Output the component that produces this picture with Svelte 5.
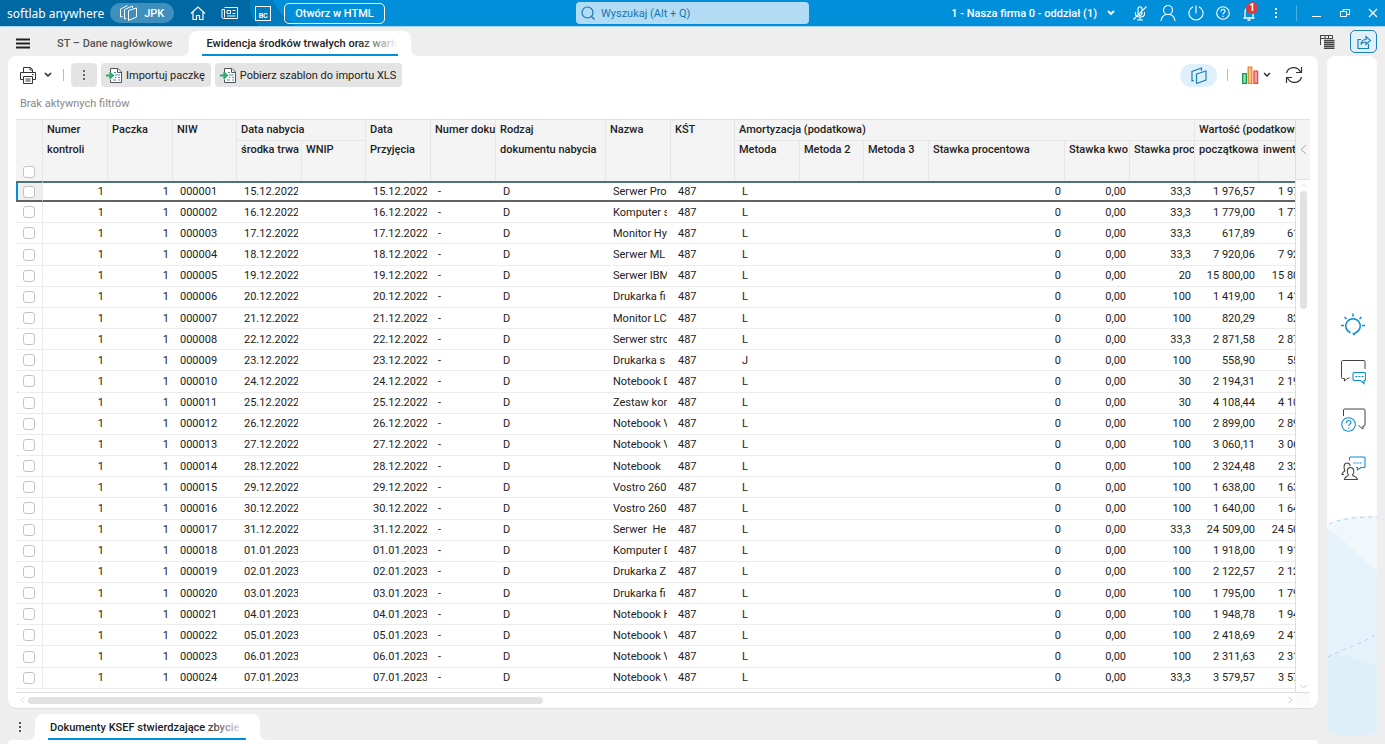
<script lang="ts">
    const widths = [27, 65, 65, 64, 65, 64, 65, 65, 110, 65, 64, 65, 64, 65, 136, 65, 65, 64, 65];

    // [acquisition date, name, method, percentage rate, initial value]
    const source = [
        ['15.12.2022', 'Serwer Pro', 'L', '33,3', '1 976,57'],
        ['16.12.2022', 'Komputer s', 'L', '33,3', '1 779,00'],
        ['17.12.2022', 'Monitor Hy', 'L', '33,3', '617,89'],
        ['18.12.2022', 'Serwer ML', 'L', '33,3', '7 920,06'],
        ['19.12.2022', 'Serwer IBM', 'L', '20', '15 800,00'],
        ['20.12.2022', 'Drukarka fi', 'L', '100', '1 419,00'],
        ['21.12.2022', 'Monitor LC', 'L', '100', '820,29'],
        ['22.12.2022', 'Serwer stro', 'L', '33,3', '2 871,58'],
        ['23.12.2022', 'Drukarka s', 'J', '100', '558,90'],
        ['24.12.2022', 'Notebook D', 'L', '30', '2 194,31'],
        ['25.12.2022', 'Zestaw kom', 'L', '30', '4 108,44'],
        ['26.12.2022', 'Notebook V', 'L', '100', '2 899,00'],
        ['27.12.2022', 'Notebook V', 'L', '100', '3 060,11'],
        ['28.12.2022', 'Notebook', 'L', '100', '2 324,48'],
        ['29.12.2022', 'Vostro 260', 'L', '100', '1 638,00'],
        ['30.12.2022', 'Vostro 260', 'L', '100', '1 640,00'],
        ['31.12.2022', 'Serwer  He', 'L', '33,3', '24 509,00'],
        ['01.01.2023', 'Komputer D', 'L', '100', '1 918,00'],
        ['02.01.2023', 'Drukarka Z', 'L', '100', '2 122,57'],
        ['03.01.2023', 'Drukarka fi', 'L', '100', '1 795,00'],
        ['04.01.2023', 'Notebook H', 'L', '100', '1 948,78'],
        ['05.01.2023', 'Notebook V', 'L', '100', '2 418,69'],
        ['06.01.2023', 'Notebook V', 'L', '100', '2 311,63'],
        ['07.01.2023', 'Notebook V', 'L', '33,3', '3 579,57']
    ];

    const rows = source.map(([date, name, method, rate, value], i) => ({
        niw: String(i + 1).padStart(6, '0'),
        date, name, method, rate, value
    }));

    let selected = $state(0);
    let query = $state('');
</script>

{#snippet excelIcon()}
    <svg width="17" height="17" viewBox="0 0 17 17" fill="none">
        <path d="M4.500 6V1.500h7.500l3.500 3.500v10.500h-11v-3" fill="#fff" stroke="#555" />
        <path d="M11.500 1.500v4h4" stroke="#555" />
        <path d="M8 5.500h2M9 8h5M9 10.500h1.500M12 10.500h2M7 13h3M12 13h2" stroke="#4a8fd0" />
        <path d="M0 8.500h5M3.500 5.500l3.500 3-3.500 3" stroke="#2fa36b" stroke-width="2" />
    </svg>
{/snippet}

<div class="app">
    <header class="topbar">
        <svg class="topbar-art" viewBox="0 0 300 26" preserveAspectRatio="none">
            <path d="M0 0h251c-3 9 0 17 8 26H0z" fill="#0068a3" />
            <path d="M251 0h22c4 9 10 17 22 26h-36c-8-9-11-17-8-26z" fill="#007bbd" />
        </svg>
        <div class="bar-left">
            <span class="brand">softlab anywhere</span>
            <button class="module">
                <svg width="18" height="16" viewBox="0 0 18 16" fill="none" stroke="#fff">
                    <path d="M8.500 5.500l8-2.500v9l-8 3.500z" />
                    <path d="M6.500 13.500l-2 .5V4.500l8-3.500v2" />
                    <path d="M2.500 11.500l-2 .5V4l7-3.500" />
                </svg>
                <span>JPK</span>
            </button>
            <button class="icon home" aria-label="Start">
                <svg width="16" height="16" viewBox="0 0 16 16" fill="none" stroke="#fff" stroke-width="1.200">
                    <path d="M1 8.500l7-6.500 7 6.500M3 7v7.500h3.500v-4h3v4H13V7" />
                </svg>
            </button>
            <button class="icon news" aria-label="Aktualności">
                <svg width="18" height="14" viewBox="0 0 18 14" fill="none" stroke="#fff">
                    <path d="M3.500 1.500h13v11h-14c-1 0-1.500-.5-1.500-1.500V3.500h2.500v8" />
                    <path d="M6 4.500h3.500v3H6zM11.500 4.500h3M11.500 7.500h3M6 10h8.500" />
                </svg>
            </button>
            <button class="bc" aria-label="BC">BC</button>
            <button class="outline">Otwórz w HTML</button>
        </div>
        <label class="search">
            <svg width="14" height="14" viewBox="0 0 14 14" fill="none" stroke="#1478b0" stroke-width="1.200">
                <circle cx="6.500" cy="6.500" r="5.500" />
                <path d="M10.500 10.500l3 3" />
            </svg>
            <input type="text" placeholder="Wyszukaj (Alt + Q)" aria-label="Wyszukaj" bind:value={query} />
        </label>
        <div class="bar-right">
            <button class="company">
                <span>1 - Nasza firma 0 - oddział (1)</span>
                <svg width="8" height="6" viewBox="0 0 8 6" fill="none" stroke="#fff" stroke-width="1.800"><path d="M1 1l3 3 3-3" /></svg>
            </button>
            <button class="icon" aria-label="Mikrofon">
                <svg width="16" height="16" viewBox="0 0 16 16" fill="none" stroke="#fff" stroke-width="1.100">
                    <path d="M6 9V4c0-3 4-3 4 0v4c0 3-3 3-4 1zM3.500 7v2c0 4 9 4 9 0V7M8 12v3M5 15h6M1.500 14.500l13-13" />
                </svg>
            </button>
            <button class="icon" aria-label="Użytkownik">
                <svg width="16" height="18" viewBox="0 0 16 18" fill="none" stroke="#fff" stroke-width="1.200">
                    <circle cx="8" cy="6" r="4.500" />
                    <path d="M1 17c.5-4 3-6 5-6.500h4c2 .5 4.500 2.500 5 6.500" />
                </svg>
            </button>
            <button class="icon" aria-label="Wyloguj">
                <svg width="16" height="16" viewBox="0 0 16 16" fill="none" stroke="#fff" stroke-width="1.100">
                    <path d="M5 1.700a7 7 0 1 0 6 0M8 .5v8" />
                </svg>
            </button>
            <button class="icon" aria-label="Pomoc">
                <svg width="14" height="14" viewBox="0 0 14 14" fill="none" stroke="#fff" stroke-width="1.100">
                    <circle cx="7" cy="7" r="6.300" />
                    <path d="M5 5.500c0-3 4-2.500 4-.3C9 6.700 7 6.700 7 8.500M7 9.700v1.200" />
                </svg>
            </button>
            <button class="icon bell" aria-label="Powiadomienia">
                <svg width="14" height="16" viewBox="0 0 14 16" fill="none" stroke="#fff" stroke-width="1.300">
                    <path d="M1.500 13h11M3 13V7c0-6 8-6 8 0v6M5.500 15h3" />
                </svg>
                <span class="badge">1</span>
            </button>
            <button class="icon more" aria-label="Więcej">
                <svg width="4" height="12" viewBox="0 0 4 12" fill="#fff"><path d="M1 1h2v2H1zM1 5h2v2H1zM1 9h2v2H1z" /></svg>
            </button>
            <span class="bar-line"></span>
            <div class="window-buttons">
                <button class="icon" aria-label="Minimalizuj">
                    <svg width="10" height="10" viewBox="0 0 10 10" stroke="#fff"><path d="M0 8.500h9" /></svg>
                </button>
                <button class="icon" aria-label="Przywróć">
                    <svg width="10" height="10" viewBox="0 0 10 10" fill="none" stroke="#fff"><path d="M.5 3.500h6v5h-6zM3 3V1.500h6.500v5H7" /></svg>
                </button>
                <button class="icon" aria-label="Zamknij">
                    <svg width="10" height="10" viewBox="0 0 10 10" stroke="#fff" stroke-width="1.200"><path d="M1 1l8 8M9 1L1 9" /></svg>
                </button>
            </div>
        </div>
    </header>

    <nav class="tabs">
        <button class="icon menu" aria-label="Menu">
            <svg width="14" height="11" viewBox="0 0 14 11" stroke="#222" stroke-width="2"><path d="M0 1.500h14M0 5.500h14M0 9.500h14" /></svg>
        </button>
        <button class="tab">ST – Dane nagłówkowe</button>
        <button class="tab active"><span>Ewidencja środków trwałych oraz wartości</span></button>
        <div class="tabs-end">
            <button class="icon" aria-label="Okna">
                <svg width="15" height="14" viewBox="0 0 15 14" fill="none" stroke="#444">
                    <path d="M.5 10V.500M0 .5h12.500V3M0 3.500h13M5 1v2M8.500 1v2" />
                    <path d="M4 5.500h10.500M4 7.500h10.500M4 9.500h10.500M4 11.500h10.500M4 13.500h10.500" stroke-width="1.300" />
                </svg>
            </button>
            <button class="share" aria-label="Udostępnij">
                <svg width="14" height="14" viewBox="0 0 14 14" fill="none" stroke="#1a7fb8" stroke-width="1.200">
                    <path d="M4 4.500H1v9h10.500V9" />
                    <path d="M4 9.500c.3-4 2-5 5-5V1.500l4.500 4-4.500 4V7c-2.500 0-4 .5-5 2.500z" />
                </svg>
            </button>
        </div>
    </nav>

    <div class="body">
        <main>
            <section class="panel">
                <div class="toolbar">
                    <button class="icon print" aria-label="Drukuj">
                        <svg width="16" height="17" viewBox="0 0 16 17" fill="none" stroke="#333">
                            <path d="M3.500 5V.500h7l2 2V5M3.500 12.500h-3v-7h15v7h-3" />
                            <path d="M3.500 9.500h9v7h-9zM5.500 12h5M5.500 14h5M10 .5v2.500h2.500M12 7.500h1.500" />
                        </svg>
                        <svg width="8" height="6" viewBox="0 0 8 6" fill="none" stroke="#222" stroke-width="1.500"><path d="M1 1l3 3 3-3" /></svg>
                    </button>
                    <span class="tool-line"></span>
                    <div class="tool-buttons">
                        <button class="tool dots" aria-label="Więcej">
                            <svg width="4" height="12" viewBox="0 0 4 12" fill="#666"><path d="M1 1h2v2H1zM1 5h2v2H1zM1 9h2v2H1z" /></svg>
                        </button>
                        <button class="tool">{@render excelIcon()}Importuj paczkę</button>
                        <button class="tool">{@render excelIcon()}Pobierz szablon do importu XLS</button>
                    </div>
                    <div class="tool-end">
                        <button class="layout" aria-label="Widok">
                            <svg width="16" height="17" viewBox="0 0 16 17" fill="none" stroke="#1a80ba" stroke-width="1.200">
                                <path d="M5.500 7l9.500-3v9l-9.500 3.500z" />
                                <path d="M3 13.500l-2 .5V4.500l9.500-3.500V4" />
                            </svg>
                        </button>
                        <span class="tool-line"></span>
                        <button class="icon chart" aria-label="Wykres">
                            <svg width="17" height="18" viewBox="0 0 17 18">
                                <path d="M.7 7.700h3.600v9.600H.7z" fill="#a5dcb5" stroke="#0e9f4f" stroke-width="1.300" />
                                <path d="M6.200 1.200h3.600v16.100H6.200z" fill="#fbc887" stroke="#e8852b" stroke-width="1.300" />
                                <path d="M12 5.200h3.600v12.100H12z" fill="#f7a5a8" stroke="#e64550" stroke-width="1.300" />
                            </svg>
                            <svg width="8" height="6" viewBox="0 0 8 6" fill="none" stroke="#222" stroke-width="1.300"><path d="M1 1l3 3 3-3" /></svg>
                        </button>
                        <button class="icon" aria-label="Odśwież">
                            <svg width="18" height="18" viewBox="0 0 18 18" fill="none" stroke="#333" stroke-width="1.200">
                                <path d="M1.500 7C3 1 12-1 15.500 6M16.500 1v5.500H11M16.500 11c-1.500 6-10.500 8-14 1M1.500 17v-5.500H7" />
                            </svg>
                        </button>
                    </div>
                </div>
                <p class="filters">Brak aktywnych filtrów</p>

                <div class="grid">
                    <div class="scroller">
                        <table>
                            <colgroup>
                                {#each widths as width}
                                    <col style="width: {width}px" />
                                {/each}
                            </colgroup>
                            <thead>
                                <tr>
                                    <th rowspan="2" class="check"><input type="checkbox" aria-label="Zaznacz wszystkie" /></th>
                                    <th rowspan="2">Numer<br />kontroli</th>
                                    <th rowspan="2">Paczka</th>
                                    <th rowspan="2">NIW</th>
                                    <th colspan="2" class="group">Data nabycia</th>
                                    <th rowspan="2">Data<br />Przyjęcia</th>
                                    <th rowspan="2">Numer doku</th>
                                    <th rowspan="2">Rodzaj<br />dokumentu nabycia</th>
                                    <th rowspan="2">Nazwa</th>
                                    <th rowspan="2">KŚT</th>
                                    <th colspan="6" class="group">Amortyzacja (podatkowa)</th>
                                    <th colspan="2" class="group">Wartość (podatkowa)</th>
                                </tr>
                                <tr class="sub">
                                    <th>środka trwa</th>
                                    <th>WNIP</th>
                                    <th>Metoda</th>
                                    <th>Metoda 2</th>
                                    <th>Metoda 3</th>
                                    <th>Stawka procentowa</th>
                                    <th>Stawka kwo</th>
                                    <th>Stawka proc</th>
                                    <th>początkowa</th>
                                    <th>inwentarz</th>
                                </tr>
                            </thead>
                            <tbody>
                                {#each rows as row, i}
                                    <tr class={selected === i ? 'selected' : ''} onclick={() => (selected = i)}>
                                        <td class="check"><input type="checkbox" aria-label={row.niw} /></td>
                                        <td class="num">1</td>
                                        <td class="num">1</td>
                                        <td><div>{row.niw}</div></td>
                                        <td><div>{row.date}</div></td>
                                        <td></td>
                                        <td><div>{row.date}</div></td>
                                        <td>-</td>
                                        <td>D</td>
                                        <td><div>{row.name}</div></td>
                                        <td>487</td>
                                        <td>{row.method}</td>
                                        <td></td>
                                        <td></td>
                                        <td class="num">0</td>
                                        <td class="num">0,00</td>
                                        <td class="num">{row.rate}</td>
                                        <td class="num">{row.value}</td>
                                        <td class="num">{row.value}</td>
                                    </tr>
                                {/each}
                            </tbody>
                        </table>
                    </div>
                    <div class="gutter">
                        <button class="gutter-head" aria-label="Zwiń">
                            <svg width="7" height="12" viewBox="0 0 7 12" fill="none" stroke="#aaa"><path d="M6 1L1 5.500 6 10" /></svg>
                        </button>
                        <div class="vscroll">
                            <svg width="7" height="5" viewBox="0 0 7 5" fill="none" stroke="#ddd"><path d="M.5 4l3-3 3 3" /></svg>
                            <div class="vtrack"><div class="vthumb"></div></div>
                            <svg width="7" height="5" viewBox="0 0 7 5" fill="none" stroke="#ccc"><path d="M.5 1l3 3 3-3" /></svg>
                        </div>
                    </div>
                </div>
                <div class="hscroll">
                    <svg width="5" height="8" viewBox="0 0 5 8" fill="none" stroke="#ddd"><path d="M4.500 1l-3.500 3 3.500 3" /></svg>
                    <div class="htrack"><div class="hthumb"></div></div>
                    <svg width="5" height="8" viewBox="0 0 5 8" fill="none" stroke="#ccc"><path d="M.5 1l3.500 3-3.500 3" /></svg>
                    <span class="corner"></span>
                </div>
            </section>

            <nav class="tabs bottom">
                <button class="icon" aria-label="Więcej">
                    <svg width="4" height="12" viewBox="0 0 4 12" fill="#555"><path d="M1 1h2v2H1zM1 5h2v2H1zM1 9h2v2H1z" /></svg>
                </button>
                <button class="tab active"><span>Dokumenty KSEF stwierdzające zbycie</span></button>
            </nav>
            <section class="next-panel"></section>
        </main>

        <aside>
            <div class="aside-icons">
                <button class="icon" aria-label="Podpowiedzi">
                    <svg width="24" height="24" viewBox="0 0 24 24" fill="none" stroke="#0d8fd6" stroke-width="1.500">
                        <path d="M9.500 19.700a7.200 7.200 0 1 1 5 0L13 21.500l-1.200-1.500M12 .500v3M3.500 4l2 2M20.500 4l-2 2M0 12.500h3M21 12.500h3" />
                    </svg>
                </button>
                <button class="icon" aria-label="Czat">
                    <svg width="25" height="25" viewBox="0 0 25 25" fill="none">
                        <path d="M24 9V1.500c0-.6-.4-1-1-1H1.500c-.6 0-1 .4-1 1v16c0 .6.400 1 1 1h2v2.500l3.500-3h1.500" stroke="#444" />
                        <path d="M13 12.500h10.500c.6 0 1 .4 1 1v6c0 .6-.4 1-1 1h-.5v3l-3.500-3H13c-.6 0-1-.4-1-1v-6c0-.6.400-1 1-1zM14.500 16.500h2M17.500 16.500h2M20.500 16.500h2" stroke="#0d8fd6" stroke-width="1.100" />
                    </svg>
                </button>
                <button class="icon" aria-label="Pytania">
                    <svg width="25" height="25" viewBox="0 0 25 25" fill="none">
                        <path d="M2.500 8V2c0-.6.400-1 1-1H23c.6 0 1 .4 1 1v15c0 .6-.4 1-1 1h-1v3l-4.500-3.500" stroke="#444" />
                        <circle cx="7.500" cy="16.500" r="6.800" stroke="#0d8fd6" stroke-width="1.100" />
                        <path d="M5.500 15c0-3.500 4.500-3 4.500-.5 0 1.500-2.300 1.800-2.300 3.500M7.700 19.500v1.200" stroke="#0d8fd6" stroke-width="1.200" />
                    </svg>
                </button>
                <button class="icon" aria-label="Społeczność">
                    <svg width="25" height="25" viewBox="0 0 25 25" fill="none">
                        <path d="M8.500 4.500V2c0-.6.400-1 1-1H23c.6 0 1 .4 1 1v8.500c0 .6-.4 1-1 1h-3l-3.500 2.500v-2.500H15M12.500 7h2M15.500 7h2M18.500 7h2" stroke="#0d8fd6" stroke-width="1.100" />
                        <path d="M3.500 23.500c.2-3.500 4-2.800 4-4.500-1.700-2-2-7.500 2-7.500s4 5.500 2 7.500c0 1.700 4.500 1 5 4.500zM3 18.500H1c0-3 3-2.500 2.700-4C2.500 12 2.700 7 6 7c2 0 3 1.300 3.300 3" stroke="#444" stroke-width="1.100" />
                    </svg>
                </button>
            </div>
            <svg class="wave" viewBox="0 0 50 220" preserveAspectRatio="none" fill="none">
                <path d="M0 10C15 2 32 0 50 0v220H0z" fill="#f0f8fc" />
                <path d="M0 14c14 6 28 24 50 42v164H0z" fill="#e6f3fb" />
                <path d="M0 138c18 2 34 7 50 12v70H0z" fill="#dfeff8" />
                <path d="M2 9C15 3 32 2 50 2M1 142c12-6 20-9 29-13 8-3 14-7 20-10" stroke="#a9d8f0" stroke-dasharray="4 4" />
            </svg>
        </aside>
    </div>
</div>

<style>
    :global(body) {
        margin: 0;
        overflow: hidden;
    }

    .app {
        display: flex;
        flex-direction: column;
        height: 100vh;
        background: #eee;
        color: #222;
        font-family: Roboto, "Noto Sans", sans-serif;
        font-size: 11px;
    }

    .app *,
    .app *::before,
    .app *::after {
        box-sizing: border-box;
    }

    button {
        display: flex;
        align-items: center;
        padding: 0;
        border: none;
        background: none;
        color: inherit;
        font: inherit;
        white-space: nowrap;
        cursor: pointer;
    }

    svg {
        display: block;
        flex: none;
    }

    .icon {
        justify-content: center;
    }

    /* Top bar */
    .topbar {
        position: relative;
        display: flex;
        align-items: center;
        height: 27px;
        flex: none;
        padding: 0 7px;
        background: #008fd8;
        border-bottom: 1px solid #a5d3ec;
        color: #fff;
    }

    .topbar-art {
        position: absolute;
        left: 0;
        top: 0;
        width: 300px;
        height: 26px;
    }

    .bar-left,
    .bar-right {
        position: relative;
        display: flex;
        align-items: center;
        flex: 1;
    }

    .brand {
        font-family: "Noto Sans", sans-serif;
        font-size: 12px;
        font-weight: 400;
    }

    .module {
        justify-content: center;
        gap: 6px;
        width: 64px;
        height: 20px;
        margin-left: 6px;
        border-radius: 10px;
        background: #3f8fbe;
        font-weight: 500;
    }

    .home {
        margin-left: 16px;
    }

    .news {
        margin-left: 15px;
    }

    .bc {
        align-items: flex-end;
        justify-content: center;
        width: 16px;
        height: 15px;
        margin-left: 16px;
        border: 1px solid #fff;
        font-size: 7px;
        font-weight: 700;
    }

    .outline {
        height: 21px;
        margin-left: 13px;
        padding: 0 10px;
        border: 1px solid #fff;
        border-radius: 5px;
        font-weight: 500;
    }

    .search {
        display: flex;
        align-items: center;
        gap: 6px;
        width: 233px;
        height: 22px;
        padding: 0 5px;
        border-radius: 4px;
        background: #b2dcf3;
    }

    .search input {
        flex: 1;
        min-width: 0;
        padding: 0;
        border: none;
        outline: none;
        background: none;
        color: #1478b0;
        font: inherit;
    }

    .search input::placeholder {
        color: #1478b0;
    }

    .bar-right {
        justify-content: flex-end;
        gap: 12px;
    }

    .company {
        gap: 10px;
        margin-right: 5px;
        font-weight: 500;
    }

    .bell {
        position: relative;
    }

    .badge {
        position: absolute;
        top: -3px;
        right: -2px;
        width: 12px;
        height: 12px;
        border-radius: 6px;
        background: #d93a3a;
        font-size: 10px;
        font-weight: 700;
        line-height: 12px;
    }

    .more {
        width: 16px;
    }

    .bar-line {
        width: 1px;
        height: 16px;
        background: #4aafe2;
    }

    .window-buttons {
        display: flex;
        gap: 18px;
        margin-left: 3px;
    }

    /* Tabs */
    .tabs {
        display: flex;
        align-items: flex-end;
        flex: none;
        height: 29px;
        padding: 0 8px;
    }

    .menu {
        width: 30px;
        height: 26px;
    }

    .tab {
        height: 25px;
        padding: 0 17px 0 19px;
        color: #555;
        font-weight: 500;
    }

    .tab.active {
        position: relative;
        width: 222px;
        padding: 0 13px;
        border-radius: 8px 8px 0 0;
        background: #fff;
        color: #222;
    }

    .tab.active::before,
    .tab.active::after {
        content: '';
        position: absolute;
        bottom: 0;
        width: 8px;
        height: 8px;
    }

    .tab.active::before {
        right: 100%;
        background: radial-gradient(circle at 0 0, transparent 8px, #fff 8px);
    }

    .tab.active::after {
        left: 100%;
        background: radial-gradient(circle at 100% 0, transparent 8px, #fff 8px);
    }

    .tab.active span {
        flex: 1;
        min-width: 0;
        height: 25px;
        padding-left: 4px;
        overflow: hidden;
        line-height: 25px;
        text-align: left;
        background: linear-gradient(#008fd8, #008fd8) bottom / 100% 2px no-repeat;
        position: relative;
    }

    .tab.active span::after {
        content: '';
        position: absolute;
        top: 0;
        right: 0;
        width: 40px;
        height: 20px;
        background: linear-gradient(to right, rgba(255, 255, 255, 0), #fff);
    }

    .tabs-end {
        display: flex;
        align-items: center;
        gap: 15px;
        margin-left: auto;
        padding-bottom: 3px;
    }

    .share {
        justify-content: center;
        width: 27px;
        height: 23px;
        border: 1px solid #1a80ba;
        border-radius: 5px;
        background: #e0f0fa;
    }

    /* Main area */
    .body {
        display: flex;
        gap: 9px;
        flex: 1;
        min-height: 0;
        padding: 0 8px;
    }

    main {
        display: flex;
        flex-direction: column;
        flex: 1;
        min-width: 0;
    }

    .panel {
        display: flex;
        flex-direction: column;
        flex: 1;
        min-height: 0;
        padding: 7px 8px 1px;
        border-radius: 8px;
        background: #fff;
        box-shadow: 0 1px 1px #ddd;
    }

    .toolbar {
        display: flex;
        align-items: center;
        height: 24px;
    }

    .print {
        gap: 8px;
        margin-left: 4px;
    }

    .tool-line {
        width: 1px;
        height: 12px;
        margin: 0 7px 0 11px;
        background: #bbb;
    }

    .tool-buttons {
        display: flex;
        gap: 4px;
    }

    .tool {
        gap: 3px;
        height: 24px;
        padding: 0 6px 0 5px;
        border-radius: 4px;
        background: #e4e4e4;
    }

    .dots {
        width: 26px;
        padding: 0;
        justify-content: center;
    }

    .tool-end {
        display: flex;
        align-items: center;
        margin-left: auto;
        padding-right: 7px;
    }

    .layout {
        justify-content: center;
        width: 37px;
        height: 23px;
        border-radius: 12px;
        background: #e0f0fa;
    }

    .tool-end .tool-line {
        margin: 0 14px 0 10px;
    }

    .chart {
        gap: 4px;
        margin-right: 14px;
    }

    .filters {
        flex: none;
        height: 32px;
        margin: 0;
        padding-left: 4px;
        color: #888;
        line-height: 34px;
    }

    /* Data grid */
    .grid {
        display: flex;
        flex: 1;
        min-height: 0;
        border-bottom: 1px solid #ddd;
    }

    .scroller {
        flex: 1;
        min-width: 0;
        height: 100%;
        padding-bottom: 3px;
        overflow: hidden;
        border-right: 1px solid #ddd;
    }

    table {
        width: 1308px;
        min-width: 100%;
        height: 100%;
        table-layout: fixed;
        border-collapse: separate;
        border-spacing: 0;
    }

    th {
        height: 40px;
        padding: 0 0 0 4px;
        overflow: hidden;
        border-right: 1px solid #e6e6e6;
        background: #f4f4f4;
        font-weight: 500;
        line-height: 20px;
        text-align: left;
        vertical-align: top;
        white-space: nowrap;
    }

    thead tr:first-child th {
        border-top: 1px solid #e2e2e2;
    }

    th.group {
        height: 21px;
        border-bottom: 1px solid #e6e6e6;
    }

    th[rowspan] {
        height: 61px;
    }

    .sub th {
        line-height: 18px;
    }

    th.check {
        padding: 0 0 3px;
        vertical-align: bottom;
    }

    td {
        height: 21px;
        padding: 0 4px 0 7px;
        border-bottom: 1px solid #ececec;
        line-height: 17px;
        white-space: pre;
    }

    td div {
        overflow: hidden;
    }

    .num {
        padding-left: 0;
        text-align: right;
    }

    td.check {
        padding: 0;
        border-right: 1px solid #ececec;
    }

    .check input {
        display: block;
        width: 12px;
        height: 12px;
        margin: 0 auto;
        border: 1px solid #c4c4c4;
        border-radius: 3px;
        background: #fff;
        appearance: none;
    }

    .check input:checked {
        background: #008fd8;
    }

    .selected td {
        border-top: 2px solid #4d7277;
        border-bottom: 2px solid #616262;
    }

    .selected .check {
        background: #eee;
        box-shadow: inset 2px 0 #008fd8;
    }

    .gutter {
        display: flex;
        flex-direction: column;
        width: 14px;
    }

    .gutter-head {
        justify-content: center;
        height: 61px;
        border-top: 1px solid #e2e2e2;
        border-bottom: 1px solid #e2e2e2;
        background: #f4f4f4;
    }

    .vscroll {
        display: flex;
        flex-direction: column;
        align-items: center;
        gap: 3px;
        flex: 1;
        padding: 3px 0;
    }

    .vtrack {
        flex: 1;
        width: 7px;
    }

    .vthumb {
        height: 24%;
        border-radius: 4px;
        background: #e2e2e2;
    }

    .hscroll {
        display: flex;
        align-items: center;
        gap: 3px;
        height: 14px;
        padding-left: 4px;
    }

    .htrack {
        flex: 1;
    }

    .hthumb {
        width: 41%;
        height: 7px;
        border-radius: 4px;
        background: #e2e2e2;
    }

    .corner {
        width: 14px;
        height: 14px;
        background: #fafafa;
    }

    /* Bottom tabs */
    .bottom {
        height: 32px;
        padding: 0;
    }

    .bottom .icon {
        width: 24px;
        height: 26px;
        margin-right: 3px;
    }

    .bottom .tab.active {
        width: 225px;
        height: 26px;
        padding: 0 14px 0 13px;
    }

    .bottom .tab.active span {
        padding-left: 2px;
    }

    .next-panel {
        height: 4px;
        border-radius: 4px 4px 0 0;
        background: #fff;
    }

    /* Side bar */
    aside {
        display: flex;
        flex-direction: column;
        width: 50px;
        margin-bottom: 9px;
        overflow: hidden;
        border-radius: 8px;
        background: #fff;
    }

    .aside-icons {
        display: flex;
        flex-direction: column;
        justify-content: flex-end;
        align-items: center;
        gap: 23px;
        flex: 1;
        padding: 0 0 34px 2px;
    }

    .wave {
        width: 100%;
        height: 220px;
    }
</style>
